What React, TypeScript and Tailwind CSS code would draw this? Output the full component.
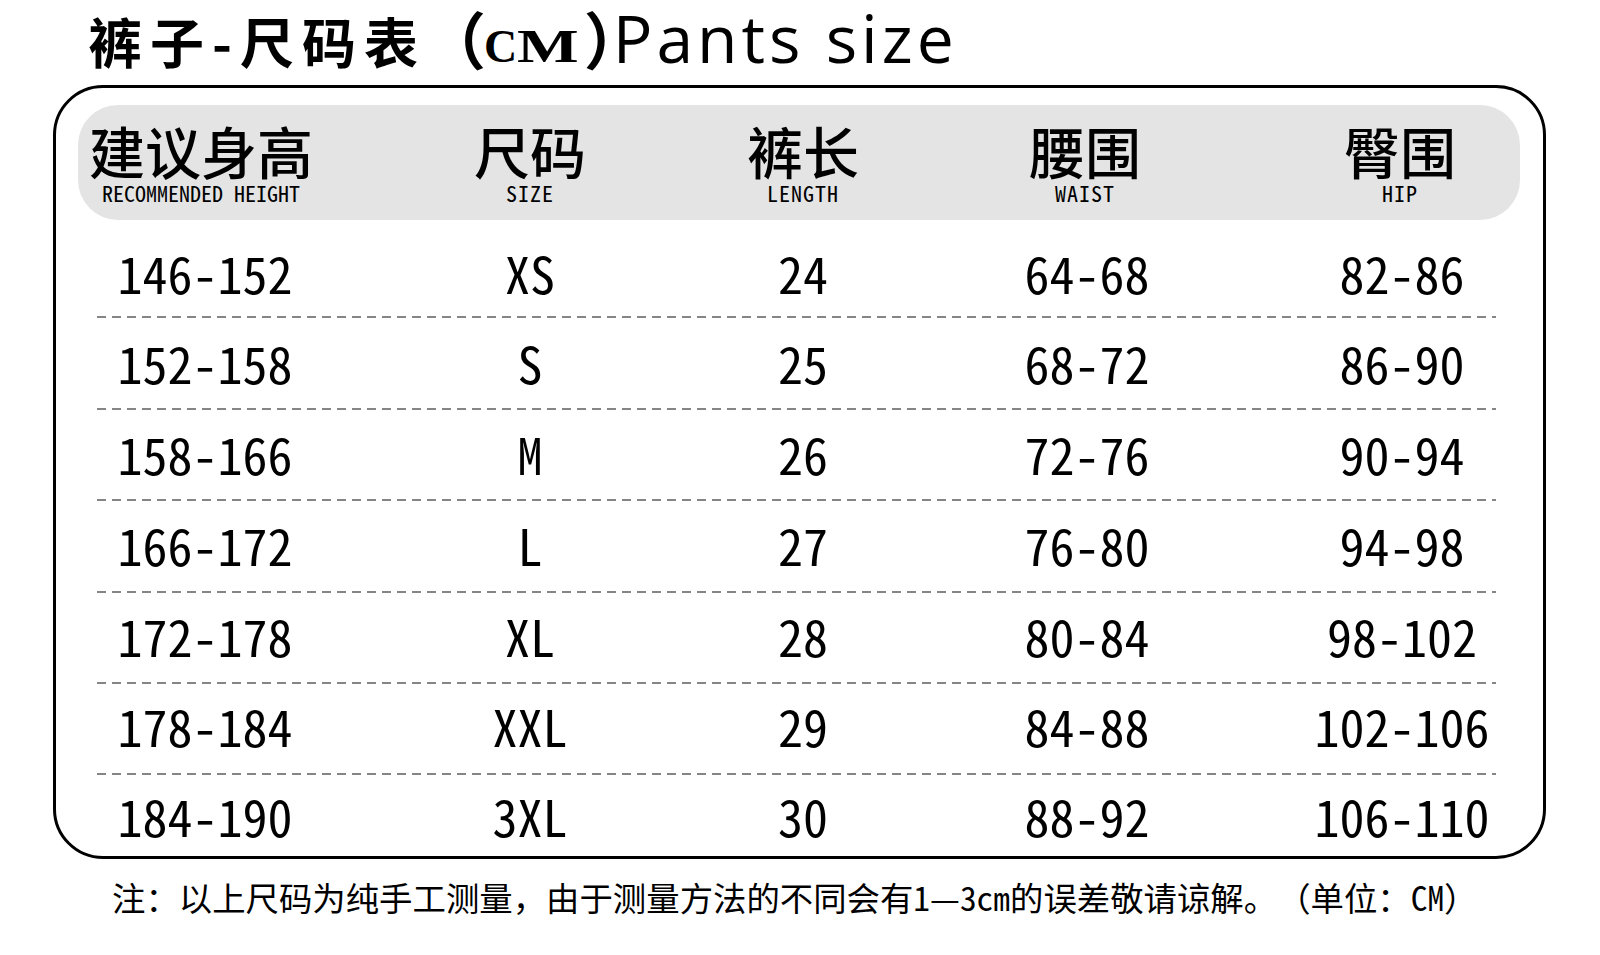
import React from "react";

const rows: string[][] = [
  ["146-152", "XS", "24", "64-68", "82-86"],
  ["152-158", "S", "25", "68-72", "86-90"],
  ["158-166", "M", "26", "72-76", "90-94"],
  ["166-172", "L", "27", "76-80", "94-98"],
  ["172-178", "XL", "28", "80-84", "98-102"],
  ["178-184", "XXL", "29", "84-88", "102-106"],
  ["184-190", "3XL", "30", "88-92", "106-110"],
];

const rowPad = [
  "h-[89.4px] pt-[20px]",
  "h-[89.4px] pt-[19px]",
  "h-[89.4px] pt-[18px]",
  "h-[89.4px] pt-[18px]",
  "h-[89.4px] pt-[17px]",
  "h-[89.4px] pt-[16px]",
  "h-[82px] pt-[15px]",
];

const headers: { zh: string; en: string; first?: boolean }[] = [
  { zh: "建议身高", en: "RECOMMENDED HEIGHT", first: true },
  { zh: "尺码", en: "SIZE" },
  { zh: "裤长", en: "LENGTH" },
  { zh: "腰围", en: "WAIST" },
  { zh: "臀围", en: "HIP" },
];

export default function App() {
  return (
    <div className="w-[1600px] h-[955px] bg-white text-black overflow-hidden font-['Noto_Sans_CJK_SC',sans-serif] [text-spacing-trim:space-all]">
      {/* Title */}
      <div className="h-[85px] pt-[4px] pl-[88px] leading-none whitespace-nowrap">
        <span className="font-['Noto_Sans_CJK_SC',sans-serif] font-bold text-[54px] tracking-[8px]">
          裤子-尺码表
        </span>
        <span className="font-['Noto_Sans_CJK_SC',sans-serif] font-bold text-[62px] -ml-[2px] align-[-1px]">（</span>
        <span className="font-['Liberation_Serif',serif] font-bold text-[46px] -ml-[2px] align-[2px]">C</span>
        <span className="inline-block font-['Liberation_Serif',serif] font-bold text-[46px] scale-x-[1.42] origin-left mr-[19px] align-[2px]">
          M
        </span>
        <span className="font-['Noto_Sans_CJK_SC',sans-serif] font-bold text-[62px] ml-[4px] -mr-[33px] align-[-1px]">）</span>
        <span className="font-['Open_Sans',sans-serif] text-[66px] tracking-[4px] align-[1px]">Pants size</span>
      </div>

      {/* Table box */}
      <div className="ml-[53px] w-[1493px] h-[774px] border-[3px] border-black rounded-[50px] pt-[17px]">
        {/* Header */}
        <div className="ml-[22px] mr-[23px] h-[115px] rounded-[40px] bg-[#e4e4e4] grid grid-cols-[246px_412px_134px_430px_200px]">
          {headers.map((h) => (
            <div key={h.zh} className="flex flex-col items-center pt-[17px] whitespace-nowrap">
              <span className="text-[56px] leading-none font-medium font-['Noto_Sans_CJK_SC',sans-serif]">
                {h.zh}
              </span>
              <span
                className={
                  h.first
                    ? "mt-[3px] text-[22px] leading-none font-['Noto_Sans_Mono_CJK_SC','Noto_Sans_CJK_SC',monospace]"
                    : "mt-[3px] text-[22px] leading-none tracking-[1px] font-['Noto_Sans_Mono_CJK_SC','Noto_Sans_CJK_SC',monospace]"
                }
              >
                {h.en}
              </span>
            </div>
          ))}
        </div>

        {/* Rows */}
        <div className="mt-[7px]">
          {rows.map((r, i) => (
            <div key={r[0]}>
              <div className={rowPad[i] + " grid grid-cols-[298px_352px_194px_374px_256px] items-start"}>
                {r.map((c, j) => (
                  <div
                    key={j}
                    className="text-center text-[50px] leading-none font-medium whitespace-nowrap font-['Noto_Sans_Mono_CJK_SC','Noto_Sans_CJK_SC',monospace]"
                  >
                    {c}
                  </div>
                ))}
              </div>
              {i < rows.length - 1 && (
                <div className="ml-[41px] mr-[47px] h-[2px] bg-[repeating-linear-gradient(to_right,#858585_0px,#858585_9px,transparent_9px,transparent_15px)]" />
              )}
            </div>
          ))}
        </div>
      </div>

      {/* Note */}
      <div className="mt-[21px] pl-[112px] text-[33.4px] leading-none font-medium whitespace-nowrap font-['Noto_Sans_Mono_CJK_SC','Noto_Sans_CJK_SC',sans-serif]">
        注：以上尺码为纯手工测量，由于测量方法的不同会有1—3cm的误差敬请谅解。（单位：CM）
      </div>
    </div>
  );
}
